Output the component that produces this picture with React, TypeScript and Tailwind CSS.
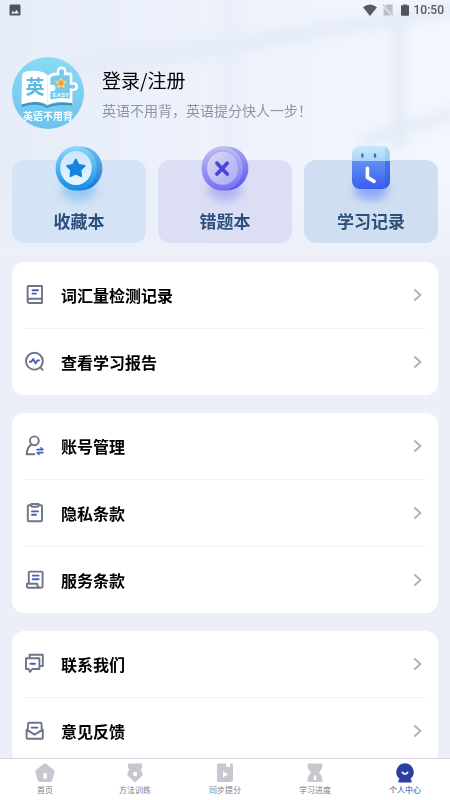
import type { ReactNode } from "react";

const line = {
  fill: "none",
  stroke: "#6f7487",
  strokeWidth: 1.9,
  strokeLinejoin: "round",
  strokeLinecap: "round",
} as const;
const accent = { ...line, stroke: "#4a60b8" } as const;

function RowIcon({ children }: { children: ReactNode }) {
  return (
    <svg viewBox="0 0 22 22" className="size-[22px] shrink-0" aria-hidden="true">
      {children}
    </svg>
  );
}

const vocabIcon = (
  <RowIcon>
    <path {...line} d="M3.6 17V3Q3.6 2 4.6 2H18V19H5.4Q3.6 19 3.6 17Q3.6 14.8 5.6 14.8H18" />
    <path {...accent} d="M8.5 6.2H14M8.5 9.6H12" />
  </RowIcon>
);
const reportIcon = (
  <RowIcon>
    <circle {...line} cx="10.4" cy="10.2" r="8.4" />
    <path {...line} d="M16.6 16.6L18.6 18.8" />
    <path {...accent} d="M5.8 10.8H7.4L9.2 8L11.6 12.4L13.4 9.4H15" />
  </RowIcon>
);
const accountIcon = (
  <RowIcon>
    <circle {...line} cx="10.4" cy="5.8" r="4.4" />
    <path {...line} d="M7.4 9.6Q3 12.5 2.6 19.2H10.4" />
    <path {...accent} strokeWidth={1.6} d="M13 14.6H18.8L17 12.8M19 17.6H13.2L15 19.4" />
  </RowIcon>
);
const privacyIcon = (
  <RowIcon>
    <path {...line} d="M7 3.2H4.8Q3.8 3.2 3.8 4.2V18.2Q3.8 19.2 4.8 19.2H17Q18 19.2 18 18.2V4.2Q18 3.2 17 3.2H15" />
    <path {...line} d="M7.2 2H14.6V3Q14.6 4.8 13 4.8H8.8Q7.2 4.8 7.2 3Z" />
    <path {...accent} d="M8 9.4H14M8 12.8H12" />
  </RowIcon>
);
const termsIcon = (
  <RowIcon>
    <path {...line} d="M4.8 14V3.6Q4.8 2.6 5.8 2.6H17.6Q18.6 2.6 18.6 3.6V17Q18.6 18.8 17 18.8H5.2Q2.8 18.8 2.8 16.4V14.8H13.2Q13.2 18.4 16 18.8" />
    <path {...accent} d="M8.8 6.6H14.6M8.8 10.2H14.6" />
  </RowIcon>
);
const contactIcon = (
  <RowIcon>
    <path {...line} d="M5.6 4V1.8H18.8V13H16.8" />
    <path {...line} d="M2 5.2H15.4V16H8.2L6 18.8L4.6 16H2Z" />
    <path {...accent} d="M6.4 10.8H11" />
  </RowIcon>
);
const feedbackIcon = (
  <RowIcon>
    <path {...line} d="M4 8.8V4Q4 2.8 5.2 2.8H16.4Q17.6 2.8 17.6 4V8.8" />
    <path {...line} d="M2.6 9.6L10.6 14.6L18.8 9.6V17.2Q18.8 18.8 17.2 18.8H4.2Q2.6 18.8 2.6 17.2Z" />
    <path {...accent} d="M7.6 7.6H13.4" />
  </RowIcon>
);

const groups = [
  [
    { label: "词汇量检测记录", icon: vocabIcon },
    { label: "查看学习报告", icon: reportIcon },
  ],
  [
    { label: "账号管理", icon: accountIcon },
    { label: "隐私条款", icon: privacyIcon },
    { label: "服务条款", icon: termsIcon },
  ],
  [
    { label: "联系我们", icon: contactIcon },
    { label: "意见反馈", icon: feedbackIcon },
  ],
];

function StatusBar() {
  return (
    <div className="flex h-5 items-center justify-between pr-1.5 pl-2">
      <svg viewBox="0 0 14 14" className="size-3.5" aria-hidden="true">
        <rect x="1.5" y="1.5" width="11" height="11" rx="1.2" fill="#50555d" />
        <path d="M3 10.5L5 8L6.4 9.6L8.6 7L11 10.5Z" fill="#eef2fb" />
      </svg>
      <div className="flex items-center">
        <svg viewBox="0 0 16 14" className="mr-1 h-3.5 w-4" aria-hidden="true">
          <path d="M1 4.2Q8 -1.4 15 4.2L8 13Z" fill="#575c63" />
        </svg>
        <svg viewBox="0 0 12 14" className="mr-1.5 h-3.5 w-3" aria-hidden="true">
          <path d="M4.6 1.5H10.6V12.5H1.6V4.6Z" fill="#b9bdc5" />
          <path d="M0.8 2L11.2 13" stroke="#f1f4fb" strokeWidth="2.2" />
          <path d="M1 1.6L11.2 12.6" stroke="#a3a7af" strokeWidth="1" />
        </svg>
        <svg viewBox="0 0 10 14" className="mr-1 h-3.5 w-2.5" aria-hidden="true">
          <rect x="3" y="1" width="4" height="2" fill="#9da1a8" />
          <rect x="1" y="2.2" width="8" height="10.6" rx="0.8" fill="#50555d" />
        </svg>
        <span className="font-['Roboto',sans-serif] text-xs font-medium text-[#565b63]">10:50</span>
      </div>
    </div>
  );
}

function Avatar() {
  return (
    <svg viewBox="0 0 72 72" className="size-[72px] shrink-0" role="img" aria-label="英语不用背">
      <defs>
        <linearGradient id="avatarSky" x1="0" y1="0" x2="0" y2="1">
          <stop offset="0" stopColor="#8adaf5" />
          <stop offset="1" stopColor="#6cc3ec" />
        </linearGradient>
      </defs>
      <circle cx="36" cy="36" r="36" fill="url(#avatarSky)" />
      <path d="M10 47Q26 42 35 49Q44 44 60 46V48.5Q44 46.5 35 51Q25 45 9.4 50Z" fill="#3f93c4" />
      <path d="M10 18Q11 15 14 14.6Q28 12 35.5 18V48Q26 42 9.4 47.5Z" fill="#fff" />
      <path
        d="M35.5 19Q39 16 45 15.6Q44.4 9.4 49.6 9.4Q55 9.4 54.2 15.6H58.4Q60.4 15.6 60.4 18V25.4Q66 24.4 66 29.6Q66 34.6 60.4 33.8V46Q44 43 35.5 48Z"
        fill="#fff"
      />
      <path
        d="M38.4 20.4Q41 18.2 47.6 18.2Q46 12 49.6 12Q53.2 12 51.6 18.2H57.8V28Q63.4 26.4 63.4 29.6Q63.4 32.6 57.8 31.2V41.6Q46 40 38.4 42.6V34Q43.4 35.4 43.4 31Q43.4 26.8 38.4 28Z"
        fill="#76c9ea"
      />
      <path d="M49 20L51 23.8L55.2 24.4L52.2 27.4L53 31.6L49 29.6L45 31.6L45.8 27.4L42.8 24.4L47 23.8Z" fill="#ffd45f" />
      <circle cx="49" cy="26" r="2.6" fill="#f29b3f" />
      <text x="49" y="40" textAnchor="middle" className="fill-white font-['Liberation_Sans',sans-serif] text-[6px] font-bold">
        EASY
      </text>
      <text x="23" y="36.5" textAnchor="middle" className="fill-[#5cb8e2] text-[19px] font-bold">
        英
      </text>
      <text x="36" y="63" textAnchor="middle" className="fill-white text-[10px] font-bold">
        英语不用背
      </text>
    </svg>
  );
}

function StarMedal() {
  return (
    <svg viewBox="0 0 48 45" className="h-[45px] w-12 overflow-visible" aria-hidden="true">
      <defs>
        <linearGradient id="starSide" x1="0" y1="0" x2="0" y2="1">
          <stop offset="0" stopColor="#72bdf0" />
          <stop offset="1" stopColor="#1673d4" />
        </linearGradient>
        <linearGradient id="starRim" x1="0" y1="0" x2="0" y2="1">
          <stop offset="0" stopColor="#8ed6f8" />
          <stop offset="1" stopColor="#138be8" />
        </linearGradient>
        <linearGradient id="starFace" x1="0" y1="0" x2="0" y2="1">
          <stop offset="0" stopColor="#c9e7fb" />
          <stop offset="1" stopColor="#e6f5ff" />
        </linearGradient>
      </defs>
      <ellipse cx="24" cy="44" rx="17" ry="11" fill="#58aef0" opacity="0.5" className="blur-[5px]" />
      <ellipse cx="25.4" cy="22.4" rx="22" ry="22" fill="url(#starSide)" />
      <ellipse cx="21.2" cy="22.4" rx="20.6" ry="22.2" fill="url(#starRim)" />
      <ellipse cx="21" cy="22" rx="15.8" ry="17" fill="url(#starFace)" />
      <path
        d="M20.8 13.4L23.6 18.8L29.6 19.8L25.4 24.2L26.2 30.2L20.8 27.6L15.4 30.2L16.2 24.2L12 19.8L18 18.8Z"
        fill="#1583e0"
        stroke="#1583e0"
        strokeWidth="1.8"
        strokeLinejoin="round"
      />
    </svg>
  );
}

function CrossMedal() {
  return (
    <svg viewBox="0 0 48 45" className="h-[45px] w-12 overflow-visible" aria-hidden="true">
      <defs>
        <linearGradient id="crossSide" x1="0" y1="0" x2="0" y2="1">
          <stop offset="0" stopColor="#a9a3ee" />
          <stop offset="1" stopColor="#5753f0" />
        </linearGradient>
        <linearGradient id="crossRim" x1="0" y1="0" x2="0" y2="1">
          <stop offset="0" stopColor="#c3bff5" />
          <stop offset="1" stopColor="#7470f8" />
        </linearGradient>
        <linearGradient id="crossFace" x1="0" y1="0" x2="1" y2="1">
          <stop offset="0" stopColor="#d9dbf3" />
          <stop offset="1" stopColor="#aaa8f6" />
        </linearGradient>
      </defs>
      <ellipse cx="24" cy="44" rx="17" ry="11" fill="#8a86f5" opacity="0.5" className="blur-[5px]" />
      <ellipse cx="25.4" cy="22.4" rx="22" ry="22" fill="url(#crossSide)" />
      <ellipse cx="21.2" cy="22.4" rx="20.6" ry="22.2" fill="url(#crossRim)" />
      <ellipse cx="21.6" cy="22" rx="16" ry="17" fill="url(#crossFace)" stroke="#9490ef" strokeWidth="0.8" />
      <path d="M16 17.2L26.2 28M26.2 17.2L16 28" stroke="#4a43dc" strokeWidth="3.8" strokeLinecap="round" />
    </svg>
  );
}

function ClockBadge() {
  return (
    <svg viewBox="0 0 40 45" className="h-[45px] w-10 overflow-visible" aria-hidden="true">
      <defs>
        <linearGradient id="clockBody" x1="0" y1="0" x2="0" y2="1">
          <stop offset="0" stopColor="#5f92f0" />
          <stop offset="1" stopColor="#3a5cf2" />
        </linearGradient>
        <linearGradient id="clockTop" x1="0" y1="0" x2="0" y2="1">
          <stop offset="0" stopColor="#c8e9fc" />
          <stop offset="1" stopColor="#a9d4f8" />
        </linearGradient>
        <clipPath id="clockShape">
          <rect x="1" y="0" width="38" height="43" rx="8" />
        </clipPath>
      </defs>
      <ellipse cx="20" cy="44" rx="17" ry="10" fill="#5f85f5" opacity="0.6" className="blur-[5px]" />
      <g clipPath="url(#clockShape)">
        <rect x="1" y="15" width="38" height="28" fill="url(#clockBody)" />
        <rect x="34" y="15" width="5" height="28" fill="#3555dd" opacity="0.5" />
        <rect x="1" y="0" width="38" height="15" fill="url(#clockTop)" />
        <rect x="34" y="0" width="5" height="15" fill="#8dc3f1" opacity="0.5" />
      </g>
      <ellipse cx="11.4" cy="9.6" rx="1.3" ry="2.4" fill="#3d74b8" />
      <ellipse cx="24" cy="9.6" rx="1.3" ry="2.4" fill="#3d74b8" />
      <path d="M16.4 22.4V31.4L23 35.4" fill="none" stroke="#fff" strokeWidth="3.6" strokeLinecap="round" strokeLinejoin="round" />
    </svg>
  );
}

const tabs = [
  {
    label: "首页",
    icon: (
      <path
        fillRule="evenodd"
        d="M9 0.8Q10 0 11 0.8L19 7Q20 8 19.6 9.2L17.2 17.6Q16.6 19 15.2 19H4.8Q3.4 19 2.8 17.6L0.4 9.2Q0 8 1 7ZM8.2 10.4V15.6H11.8V10.4Z"
      />
    ),
  },
  {
    label: "方法训练",
    icon: (
      <path
        fillRule="evenodd"
        d="M3 0.6H17V5L15.8 6L18 12L10.8 18.8Q10 19.4 9.2 18.8L2 12L4.2 6L3 5ZM10 8.8A2.2 2.2 0 1 0 10 13.2A2.2 2.2 0 1 0 10 8.8Z"
      />
    ),
  },
  {
    label: "同步提分",
    icon: (
      <path
        fillRule="evenodd"
        d="M3.4 0.6H11.4V4.6L13.2 3.4L15 4.6V0.6H16Q18 0.6 18 2.6V17Q18 19 16 19H4Q2 19 2 17V2.6Q2 0.6 3.4 0.6ZM8 8V14.4L13 11.2Z"
      />
    ),
  },
  {
    label: "学习进度",
    icon: (
      <path
        fillRule="evenodd"
        d="M3.4 0.6H16.6Q17.8 0.6 17.6 2.4Q17.4 6 14 9.6Q17.4 13 17.6 17.2Q17.8 19 16.6 19H3.4Q2.2 19 2.4 17.2Q2.6 13 6 9.6Q2.6 6 2.4 2.4Q2.2 0.6 3.4 0.6ZM10 11.8L8.8 13.4V17H11.2V13.4Z"
      />
    ),
  },
  {
    label: "个人中心",
    active: true,
    icon: (
      <>
        <path d="M10 0.2A8.8 8.8 0 0 1 15.4 15.8L16.6 17.4V19.4H3.4V17.4L4.6 15.8A8.8 8.8 0 0 1 10 0.2Z" />
        <path d="M7.4 9.4Q10 12.6 12.6 9.4" fill="none" stroke="#fff" strokeWidth="1.7" strokeLinecap="round" />
      </>
    ),
  },
];

const shortcuts = [
  { label: "收藏本", art: <StarMedal />, tint: "bg-[#d4e3f6]" },
  { label: "错题本", art: <CrossMedal />, tint: "bg-[#dcdff3]" },
  { label: "学习记录", art: <ClockBadge />, tint: "bg-[#cfdff1]" },
];

function Backdrop() {
  return (
    <svg
      viewBox="0 0 450 256"
      preserveAspectRatio="none"
      className="pointer-events-none absolute inset-x-0 top-0 -z-10 h-64 w-full"
      aria-hidden="true"
    >
      <defs>
        <linearGradient id="wall" x1="0" y1="0" x2="1" y2="0">
          <stop offset="0" stopColor="#e7edf8" />
          <stop offset="0.5" stopColor="#edf2fb" />
          <stop offset="1" stopColor="#f4f7fd" />
        </linearGradient>
        <linearGradient id="wallFade" x1="0" y1="0" x2="0" y2="1">
          <stop offset="0.7" stopColor="#eceff7" stopOpacity="0" />
          <stop offset="1" stopColor="#eceff7" />
        </linearGradient>
      </defs>
      <rect width="450" height="256" fill="url(#wall)" />
      <g fill="none" stroke="#e1e9f7" className="blur-[6px]">
        <path d="M60 68L225 46L460 8" strokeWidth="14" opacity="0.8" />
        <path d="M230 -10V150" strokeWidth="12" opacity="0.4" />
        <path d="M399 15V150" strokeWidth="10" />
        <path d="M360 142L460 112" strokeWidth="14" opacity="0.7" />
      </g>
      <rect width="450" height="256" fill="url(#wallFade)" />
    </svg>
  );
}

export default function App() {
  return (
    <div className="flex h-screen flex-col bg-[#eceff7] font-['Noto_Sans_CJK_SC',sans-serif] text-black">
      <main className="relative isolate min-h-0 flex-1 overflow-y-auto [scrollbar-width:none]">
        <Backdrop />
        <StatusBar />

        <header className="px-3 pt-[37px]">
          <button type="button" className="flex items-center gap-[18px] text-left">
            <Avatar />
            <span className="flex flex-col gap-1.5">
              <span className="text-[19px] leading-7">登录/注册</span>
              <span className="text-sm leading-5 text-[#8f94a3]">英语不用背，英语提分快人一步！</span>
            </span>
          </button>
        </header>

        <section className="mt-[31px] grid grid-cols-3 gap-3 px-3">
          {shortcuts.map((s) => (
            <button key={s.label} type="button" className={`flex flex-col items-center rounded-xl pb-2.5 ${s.tint}`}>
              <span className="-mt-3.5">{s.art}</span>
              <span className="mt-[18px] text-[17px] leading-6 font-bold text-[#2c4f7c]">{s.label}</span>
            </button>
          ))}
        </section>

        <div className="mt-[19px] flex flex-col gap-[18px] px-3 pb-4">
          {groups.map((rows) => (
            <ul key={rows[0].label} className="rounded-xl bg-white px-3">
              {rows.map((row, i) => (
                <li key={row.label} className={i > 0 ? "border-t border-[#f3f4f6]" : ""}>
                  <button type="button" className="flex h-[66px] w-full items-center gap-[15px] text-left">
                    {row.icon}
                    <span className="flex-1 text-base leading-6 font-bold">{row.label}</span>
                    <svg viewBox="0 0 16 16" className="size-4" aria-hidden="true">
                      <path d="M4.4 2.4L10.4 8L4.4 13.6" fill="none" stroke="#b3b3b5" strokeWidth="2" />
                    </svg>
                  </button>
                </li>
              ))}
            </ul>
          ))}
        </div>
      </main>

      <nav className="flex border-t border-[#d5d7dc] bg-white pt-1 pb-1">
        {tabs.map((tab) => (
          <button
            key={tab.label}
            type="button"
            aria-current={tab.active ? "page" : undefined}
            className={`flex flex-1 flex-col items-center gap-px ${tab.active ? "text-[#2b3fa0]" : "text-[#7b7f8c]"}`}
          >
            <svg
              viewBox="0 0 20 20"
              className={`size-5 ${tab.active ? "fill-[#2b3fa0]" : "fill-[#c6c8d0]"}`}
              aria-hidden="true"
            >
              {tab.icon}
            </svg>
            <span className="text-[8px] leading-3">{tab.label}</span>
          </button>
        ))}
      </nav>
    </div>
  );
}
